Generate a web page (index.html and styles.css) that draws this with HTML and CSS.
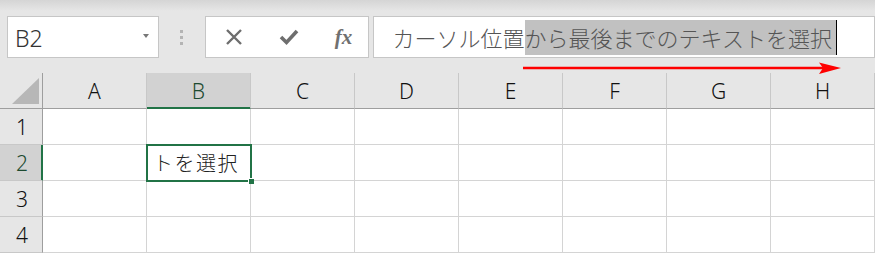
FILE: index.html
```html
<!DOCTYPE html>
<html lang="ja">
<head>
<meta charset="utf-8">
<link rel="stylesheet" href="styles.css">
</head>
<body>
<div class="app">
  <div class="toolbar">
    <div class="namebox">
      <span class="name">B2</span>
      <span class="dd"></span>
    </div>
    <div class="grip"><span></span><span></span><span></span></div>
    <div class="btnbox">
      <svg class="ic" width="20" height="18" viewBox="0 0 20 18"><path d="M3 2 L17 16 M17 2 L3 16" stroke="#6e6e6e" stroke-width="2.4" fill="none"/></svg>
      <svg class="ic" width="22" height="18" viewBox="0 0 22 18"><path d="M3 9 L8.5 14.5 L19 3" stroke="#6e6e6e" stroke-width="3.6" fill="none" stroke-linejoin="miter"/></svg>
      <span class="fx">fx</span>
    </div>
    <div class="formula"><span class="txt">カーソル位置</span><span class="sel">から最後までのテキストを選択</span></div>
  </div>
  <div class="grid">
    <div class="corner"><svg width="42" height="35" viewBox="0 0 42 35"><polygon points="39,5 39,31 12,31" fill="#b7b7b7"/></svg></div>
    <div class="ch">A</div>
    <div class="ch on">B</div>
    <div class="ch">C</div>
    <div class="ch">D</div>
    <div class="ch">E</div>
    <div class="ch">F</div>
    <div class="ch">G</div>
    <div class="ch">H</div>

    <div class="rh">1</div>
    <div class="c"></div><div class="c"></div><div class="c"></div><div class="c"></div><div class="c"></div><div class="c"></div><div class="c"></div><div class="c"></div>

    <div class="rh on">2</div>
    <div class="c"></div><div class="c active">トを選択<span class="handle"></span></div><div class="c"></div><div class="c"></div><div class="c"></div><div class="c"></div><div class="c"></div><div class="c"></div>

    <div class="rh">3</div>
    <div class="c"></div><div class="c"></div><div class="c"></div><div class="c"></div><div class="c"></div><div class="c"></div><div class="c"></div><div class="c"></div>

    <div class="rh">4</div>
    <div class="c"></div><div class="c"></div><div class="c"></div><div class="c"></div><div class="c"></div><div class="c"></div><div class="c"></div><div class="c"></div>
  </div>
  <svg class="arrow" width="330" height="20" viewBox="518 58 330 20">
    <line x1="523" y1="68" x2="826" y2="68" stroke="#ff0000" stroke-width="2.5"/>
    <polygon points="819,62.5 841,68 819,74 823,68" fill="#ff0000"/>
  </svg>
</div>
</body>
</html>
```
FILE: styles.css
```css
html, body {
  margin: 0;
  padding: 0;
}
body {
  width: 875px;
  height: 253px;
  overflow: hidden;
  background: #e6e6e6;
  font-family: "Noto Sans", "Noto Sans CJK JP", sans-serif;
}
.app {
  position: relative;
  width: 875px;
  height: 253px;
  background: linear-gradient(#d5d5d5, #e6e6e6 11px);
}
.toolbar {
  display: flex;
  align-items: flex-start;
  padding: 16px 0 0 7px;
  height: 57px;
  box-sizing: border-box;
}
.namebox {
  box-sizing: border-box;
  width: 152px;
  height: 42px;
  background: #fff;
  border: 1px solid #c6c6c6;
  display: flex;
  align-items: center;
  justify-content: space-between;
  padding: 0 9px 0 7px;
}
.name {
  font-family: "Noto Sans", sans-serif;
  font-size: 23px;
  font-weight: 300;
  color: #333;
  line-height: 1;
  margin-top: 2px;
}
.dd {
  width: 0;
  height: 0;
  border-left: 3.5px solid transparent;
  border-right: 3.5px solid transparent;
  border-top: 4px solid #777;
  margin-bottom: 3px;
}
.grip {
  width: 46px;
  height: 42px;
  display: flex;
  flex-direction: column;
  align-items: center;
  justify-content: center;
  gap: 3px;
}
.grip span {
  width: 3px;
  height: 3px;
  background: #b4b4b4;
}
.btnbox {
  box-sizing: border-box;
  width: 164px;
  height: 42px;
  background: #fff;
  border: 1px solid #c6c6c6;
  display: flex;
  align-items: center;
  padding: 0 0 0 18px;
  gap: 34px;
}
.ic {
  display: block;
}
.fx {
  font-family: "Liberation Serif", serif;
  font-style: italic;
  font-weight: bold;
  font-size: 21px;
  color: #707070;
  line-height: 1;
  margin-left: 1px;
}
.formula {
  box-sizing: border-box;
  margin-left: 4px;
  width: 503px;
  height: 42px;
  background: #fff;
  border: 1px solid #c6c6c6;
  display: flex;
  align-items: center;
  padding-left: 19px;
  font-family: "Noto Sans CJK JP", sans-serif;
  font-size: 22px;
  font-weight: 300;
  color: #555;
  white-space: nowrap;
}
.txt, .sel {
  display: inline-block;
  height: 35px;
  line-height: 35px;
}
.sel {
  background: #c1c1c1;
  padding-right: 4px;
  border-right: 1.5px solid #000;
}
.grid {
  margin-top: 16px;
  display: grid;
  grid-template-columns: 43px repeat(8, 104px);
  grid-template-rows: repeat(5, 36px);
}
.grid > div {
  box-sizing: border-box;
}
.corner {
  border-right: 1px solid #9e9e9e;
  border-bottom: 1px solid #9e9e9e;
  overflow: hidden;
}
.corner svg { display: block; }
.ch {
  border-right: 1px solid #c8c8c8;
  border-bottom: 1px solid #9e9e9e;
  display: flex;
  align-items: center;
  justify-content: center;
  font-family: "Noto Sans", sans-serif;
  font-size: 21px;
  font-weight: 300;
  color: #111;
}
.ch.on {
  background: #d2d2d2;
  border-bottom-color: #217346;
  box-shadow: inset 0 -1px 0 #217346;
  color: #1c4a30;
}
.rh {
  background: #e6e6e6;
  border-right: 1px solid #9e9e9e;
  border-bottom: 1px solid #c8c8c8;
  display: flex;
  align-items: center;
  justify-content: center;
  font-family: "Noto Sans", sans-serif;
  font-size: 21px;
  font-weight: 300;
  color: #111;
  padding-left: 2px;
}
.rh.on {
  background: #d2d2d2;
  border-right-color: #217346;
  box-shadow: inset -1px 0 0 #217346;
  color: #1c4a30;
}
.c {
  background: #fff;
  border-right: 1px solid #d4d4d4;
  border-bottom: 1px solid #d4d4d4;
}
.c.active {
  position: relative;
  outline: 2px solid #217346;
  outline-offset: -1px;
  display: flex;
  align-items: center;
  padding-left: 6px;
  font-family: "Noto Sans CJK JP", sans-serif;
  font-size: 20px;
  font-weight: 300;
  letter-spacing: 1.5px;
  color: #222;
  z-index: 1;
}
.handle {
  position: absolute;
  right: -4px;
  bottom: -4px;
  width: 5px;
  height: 5px;
  background: #217346;
  border-left: 1px solid #fff;
  border-top: 1px solid #fff;
}
.arrow {
  position: absolute;
  left: 518px;
  top: 58px;
}
```
